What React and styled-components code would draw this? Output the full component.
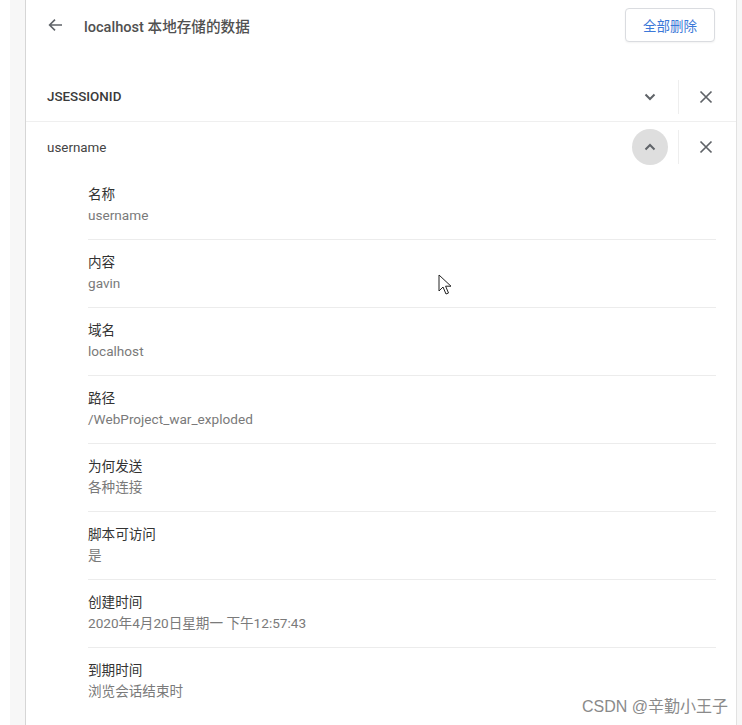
import React from "react";
import styled, { createGlobalStyle } from "styled-components";

const GlobalStyle = createGlobalStyle`
  html, body {
    margin: 0;
    padding: 0;
    background: #ffffff;
  }
  body {
    font-family: Roboto, "Noto Sans CJK SC", "Liberation Sans", sans-serif;
    font-size: 13px;
    color: #333333;
  }
`;

const Page = styled.div`
  display: flex;
  height: 725px;
  padding-left: 10px;
  background: #ffffff;
  overflow: hidden;
`;

const Gutter = styled.div`
  width: ${props => props.width}px;
  flex-shrink: 0;
  background: #f7f7f7;
`;

const Card = styled.div`
  width: 710px;
  flex-shrink: 0;
  border-left: 1px solid #d6d6d6;
  border-right: 1px solid #e2e2e2;
  background: #ffffff;
  position: relative;
`;

const Header = styled.div`
  display: flex;
  align-items: center;
  height: 34px;
  padding: 8px 21px 0 21px;
  margin-bottom: 30px;
`;

const BackButton = styled.div`
  display: flex;
  align-items: center;
  width: 16px;
  height: 16px;
  margin-right: 21px;
  color: #5f6368;
`;

const Title = styled.div`
  flex: 1;
  font-size: 14.6px;
  color: #505050;
  font-weight: 500;
`;

const DeleteAll = styled.button`
  height: 34px;
  width: 90px;
  border: 1px solid #dadce0;
  border-radius: 4px;
  background: #ffffff;
  color: #3b78d8;
  font-family: Roboto, "Noto Sans CJK SC", sans-serif;
  font-size: 13.5px;
  box-shadow: 0 1px 2px rgba(0, 0, 0, 0.05);
`;

const CookieRow = styled.div`
  display: flex;
  align-items: center;
  height: 50px;
  padding: 0 23px 0 21px;
  border-bottom: ${props => (props.divider ? "1px solid #efefef" : "none")};
  box-sizing: border-box;
`;

const CookieName = styled.div`
  flex: 1;
  font-size: 13.4px;
  color: ${props => (props.strong ? "#3a3a3a" : "#444444")};
  font-weight: ${props => (props.strong ? 500 : 400)};
`;

const ExpandButton = styled.div`
  width: 36px;
  height: 36px;
  border-radius: 50%;
  display: flex;
  align-items: center;
  justify-content: center;
  background: ${props => (props.open ? "#dedede" : "transparent")};
  color: #5f6368;
  margin-right: 10px;
`;

const Divider = styled.div`
  width: 1px;
  height: 34px;
  background: #eeeeee;
`;

const CloseButton = styled.div`
  width: 34px;
  display: flex;
  align-items: center;
  justify-content: flex-end;
  color: #5f6368;
`;

const Details = styled.div`
  padding: 0 20px 0 62px;
`;

const DetailRow = styled.div`
  padding: 12px 0 13px;
  border-bottom: ${props => (props.last ? "none" : "1px solid #ececec")};
`;

const Label = styled.div`
  line-height: 21px;
  font-size: 13.6px;
  color: #333333;
`;

const Value = styled.div`
  line-height: 21px;
  font-size: 13.6px;
  color: #7a7a7a;
`;

const Cursor = styled.svg`
  position: absolute;
  left: 412px;
  top: 274px;
`;

const Watermark = styled.div`
  position: absolute;
  right: 8px;
  bottom: 8px;
  font-family: "Liberation Sans", "Noto Sans CJK SC", sans-serif;
  font-size: 16px;
  color: #8a8a8a;
`;

const ArrowLeft = () => (
  <svg width="16" height="16" viewBox="0 0 16 16">
    <path d="M15 8H2.8M8 2.6L2.6 8L8 13.4" fill="none" stroke="currentColor" strokeWidth="1.6" />
  </svg>
);

const Chevron = ({ up }) => (
  <svg width="12" height="8" viewBox="0 0 12 8">
    <path
      d={up ? "M1.5 6.5L6 2L10.5 6.5" : "M1.5 1.5L6 6L10.5 1.5"}
      fill="none"
      stroke="currentColor"
      strokeWidth="2"
    />
  </svg>
);

const Cross = () => (
  <svg width="14" height="14" viewBox="0 0 14 14">
    <path d="M1.5 1.5L12.5 12.5M12.5 1.5L1.5 12.5" fill="none" stroke="currentColor" strokeWidth="1.7" />
  </svg>
);

const details = [
  { label: "名称", value: "username" },
  { label: "内容", value: "gavin" },
  { label: "域名", value: "localhost" },
  { label: "路径", value: "/WebProject_war_exploded" },
  { label: "为何发送", value: "各种连接" },
  { label: "脚本可访问", value: "是" },
  { label: "创建时间", value: "2020年4月20日星期一 下午12:57:43" },
  { label: "到期时间", value: "浏览会话结束时" }
];

const App = () => (
  <Page>
    <GlobalStyle />
    <Gutter width={15} />
    <Card>
      <Header>
        <BackButton>
          <ArrowLeft />
        </BackButton>
        <Title>localhost 本地存储的数据</Title>
        <DeleteAll>全部删除</DeleteAll>
      </Header>
      <CookieRow divider>
        <CookieName strong>JSESSIONID</CookieName>
        <ExpandButton>
          <Chevron />
        </ExpandButton>
        <Divider />
        <CloseButton>
          <Cross />
        </CloseButton>
      </CookieRow>
      <CookieRow>
        <CookieName>username</CookieName>
        <ExpandButton open>
          <Chevron up />
        </ExpandButton>
        <Divider />
        <CloseButton>
          <Cross />
        </CloseButton>
      </CookieRow>
      <Details>
        {details.map((d, i) => (
          <DetailRow key={d.label} last={i === details.length - 1}>
            <Label>{d.label}</Label>
            <Value>{d.value}</Value>
          </DetailRow>
        ))}
      </Details>
      <Cursor width="14" height="22" viewBox="0 0 14 22">
        <path d="M1 1V17L5 13L8 20L10.5 19L7.6 12.2H13Z" fill="#ffffff" stroke="#222222" strokeWidth="1" />
      </Cursor>
      <Watermark>CSDN @辛勤小王子</Watermark>
    </Card>
    <Gutter width={6} />
  </Page>
);

export default App;
